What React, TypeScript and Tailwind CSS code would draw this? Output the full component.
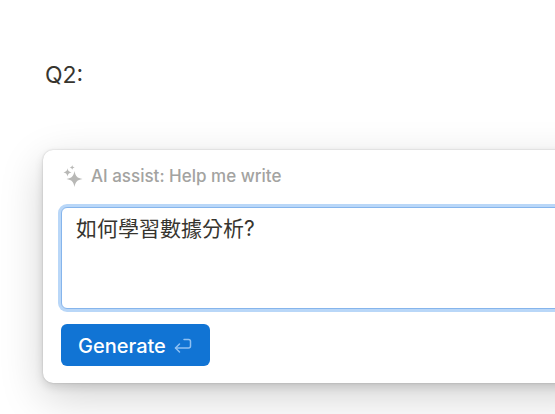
import * as React from "react";

function SparkleIcon({ className }: { className?: string }) {
  return (
    <svg viewBox="0 0 20 22" fill="currentColor" className={className} aria-hidden="true">
      <path d="M11.500 6c1 5.200 2.500 7 8 8-5.500 1-7 2.800-8 8-1-5.200-2.500-7-8-8 5.500-1 7-2.800 8-8Z" />
      <path d="M4.500 3.300c.5 2.700 1.200 3.500 4 4.100-2.800.6-3.500 1.400-4 4.100-.5-2.700-1.200-3.500-4-4.100 2.800-.6 3.500-1.400 4-4.100Z" />
      <path d="M9.200 0c.3 1.600.8 2.100 2.500 2.400-1.700.3-2.200.8-2.500 2.400-.3-1.600-.8-2.100-2.500-2.400 1.700-.3 2.200-.8 2.500-2.400Z" />
    </svg>
  );
}

function ReturnIcon({ className }: { className?: string }) {
  return (
    <svg
      viewBox="0 0 18 16"
      fill="none"
      stroke="currentColor"
      strokeWidth="1.5"
      strokeLinecap="round"
      strokeLinejoin="round"
      className={className}
      aria-hidden="true"
    >
      <path d="M10 1.500h4.500q2 0 2 2v4.500q0 2-2 2h-13" />
      <path d="M5.500 6 1.500 10l4 4" />
    </svg>
  );
}

function AssistCard() {
  const [prompt, setPrompt] = React.useState("如何學習數據分析?");

  return (
    <form
      onSubmit={(event) => event.preventDefault()}
      className="mt-14 -mr-12 rounded-[10px] bg-white px-[18px] pt-3 pb-[17px] shadow-[0_0_2px_rgba(0,0,0,0.2),0_4px_10px_rgba(0,0,0,0.12),0_14px_44px_rgba(0,0,0,0.18)]"
    >
      <label
        htmlFor="prompt"
        className="flex items-center gap-2 text-[17px] leading-7 font-medium text-[#a3a3a1]"
      >
        <SparkleIcon className="ml-0.5 h-[22px] w-5 text-[#b8b8b6]" />
        AI assist: Help me write
      </label>
      <textarea
        id="prompt"
        value={prompt}
        onChange={(event) => setPrompt(event.target.value)}
        className="mt-[17px] block h-[102px] w-full resize-none rounded-md border border-[#86b5ec] bg-white px-3.5 pt-[5px] text-[21px] leading-8 text-[#37352f] ring-3 ring-[#b9d7f8] outline-none"
      />
      <button
        type="submit"
        className="mt-[15px] flex h-[42px] items-center gap-2 rounded-md bg-[#1174d4] pt-0.5 pr-[18px] pl-[17px] text-xl font-medium text-white"
      >
        Generate
        <ReturnIcon className="h-4 w-[18px] text-[#8fc0f2]" />
      </button>
    </form>
  );
}

export default function App() {
  return (
    <main className="min-h-screen overflow-hidden bg-white pt-[57px] pb-8 pl-[43px] font-['Inter','Noto_Sans_CJK_TC',sans-serif]">
      <h1 className="pb-px pl-0.5 text-[23px] leading-9 text-[#37352f]">Q2:</h1>
      <AssistCard />
    </main>
  );
}
